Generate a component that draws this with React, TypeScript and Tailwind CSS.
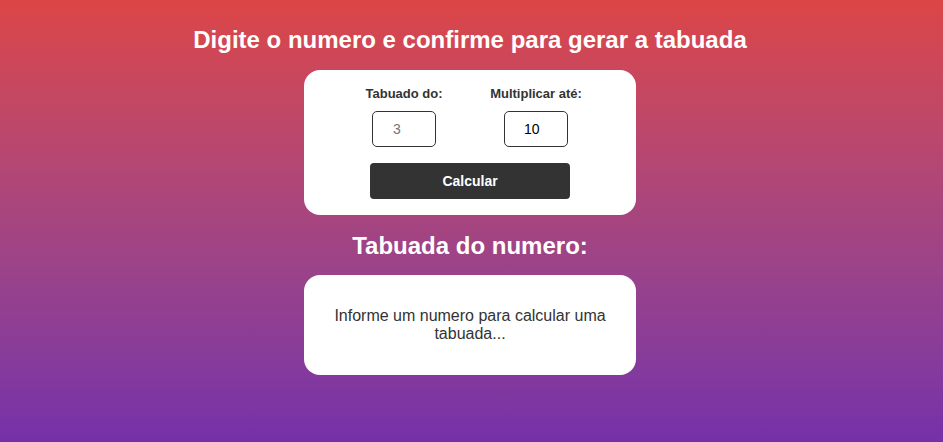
import React, { useState } from 'react';

const App: React.FC = () => {
  const [numero, setNumero] = useState('');
  const [limite, setLimite] = useState('10');

  return (
    <div
      className="min-h-screen w-full flex flex-col items-center bg-gradient-to-b from-[#dc4545] to-[#7530a9] pt-[26px] pr-[3px]"
      style={{ fontFamily: '"Liberation Sans", Arial, sans-serif' }}
    >
      <h1 className="text-white text-[24px] leading-[28px] font-bold mb-4">
        Digite o numero e confirme para gerar a tabuada
      </h1>

      {/* Form */}
      <div className="bg-white rounded-2xl w-[332px] h-[145px] pt-4 flex flex-col items-center">
        <div className="flex justify-center gap-[22px]">
          <div className="w-[110px] flex flex-col items-center">
            <label className="text-[13px] leading-[15px] font-bold text-[#333]">Tabuado do:</label>
            <input
              type="number"
              value={numero}
              onChange={e => setNumero(e.target.value)}
              placeholder="3"
              className="mt-[10px] w-[64px] h-[36px] border border-[#333] rounded-[5px] pl-[20px] text-[14px] text-black placeholder:text-[#757575] outline-none"
            />
          </div>
          <div className="w-[110px] flex flex-col items-center">
            <label className="text-[13px] leading-[15px] font-bold text-[#333]">Multiplicar até:</label>
            <input
              type="number"
              value={limite}
              onChange={e => setLimite(e.target.value)}
              className="mt-[10px] w-[64px] h-[36px] border border-[#333] rounded-[5px] pl-[19px] text-[14px] text-black outline-none"
            />
          </div>
        </div>
        <button className="mt-4 w-[200px] h-[36px] bg-[#333] rounded-[4px] text-white text-[14px] font-bold">
          Calcular
        </button>
      </div>

      <h2 className="text-white text-[24px] leading-[28px] font-bold mt-[17px] mb-[15px]">
        Tabuada do numero:
      </h2>

      {/* Result */}
      <div className="bg-white rounded-2xl w-[332px] h-[100px] px-[30px] flex items-center justify-center">
        <p className="text-[16px] leading-[18px] text-[#333] text-center">
          Informe um numero para calcular uma tabuada...
        </p>
      </div>
    </div>
  );
};

export default App;
